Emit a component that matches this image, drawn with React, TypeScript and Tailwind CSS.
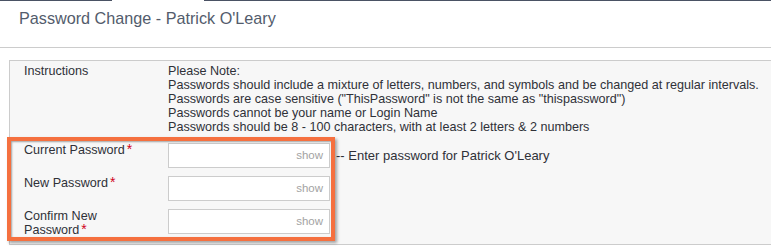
import React from 'react';

const notes = [
  'Please Note:',
  'Passwords should include a mixture of letters, numbers, and symbols and be changed at regular intervals.',
  'Passwords are case sensitive ("ThisPassword" is not the same as "thispassword")',
  'Passwords cannot be your name or Login Name',
  'Passwords should be 8 - 100 characters, with at least 2 letters & 2 numbers',
];

const fields = [
  { label: 'Current Password', hint: "-- Enter password for Patrick O'Leary" },
  { label: 'New Password' },
  { label: 'Confirm New Password' },
];

function Required() {
  return <span className="ml-[2px] align-top text-[14px] leading-[12px] text-[#d0021b]">*</span>;
}

function PasswordRow({ label, hint }: { label: string; hint?: string }) {
  return (
    <div className="flex items-start py-[4px]">
      <div className="w-[144px] shrink-0">
        <div className="w-[120px] leading-[14px]">
          {label}
          <Required />
        </div>
      </div>
      <div className="flex h-[25px] items-center">
        <div className="flex h-[25px] w-[162px] items-center justify-end border border-[#cccccc] bg-white pr-[6px] text-[11.5px] text-[#a3a3a3]">
          show
        </div>
        {hint && <span className="ml-[6px] text-[13px] leading-[14px]">{hint}</span>}
      </div>
    </div>
  );
}

export default function App() {
  return (
    <div className="h-[248px] w-[771px] overflow-hidden bg-white font-['Liberation_Sans',Arial,sans-serif] text-[12.6px] text-[#2f3138]">
      <div className="flex h-px">
        <div className="w-[112px] bg-[#4a5264]" />
        <div className="w-[92px]" />
        <div className="flex-1 bg-[#4a5264]" />
      </div>
      <div className="h-[47px] border-b border-[#cccccc] pl-[19px] pt-[7px] text-[16.2px] leading-[20px] text-[#535c6c]">
        Password Change - Patrick O'Leary
      </div>

      <div className="ml-[9px] mt-[12px] border-y border-l border-[#cccccc] bg-[#f7f7f7] pb-[3px] pl-[14px]">
        <div className="flex pb-[5px] pt-[3px] leading-[14px]">
          <div className="w-[144px] shrink-0">Instructions</div>
          <div className="whitespace-nowrap">
            {notes.map((n) => (
              <div key={n}>{n}</div>
            ))}
          </div>
        </div>

        <div className="relative">
          {fields.map((f) => (
            <PasswordRow key={f.label} label={f.label} hint={f.hint} />
          ))}
          <div className="pointer-events-none absolute left-[-17px] top-[-2px] h-[104px] w-[328px] border-4 border-[#f5703f] shadow-[2px_2px_3px_rgba(0,0,0,0.35),inset_1px_1px_2px_rgba(0,0,0,0.35)]" />
        </div>
      </div>
    </div>
  );
}
